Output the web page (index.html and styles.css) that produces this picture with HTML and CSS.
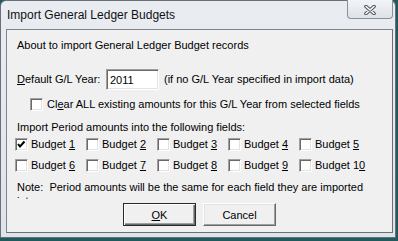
FILE: index.html
```html
<!DOCTYPE html>
<html>
<head>
<meta charset="utf-8">
<link rel="stylesheet" href="styles.css">
</head>
<body>
<div class="window">
  <div class="titlebar">
    <span class="title">Import General Ledger Budgets</span>
    <div class="close">
      <svg width="12" height="10" viewBox="0 0 12 10">
        <path d="M2 1.5 L10 8.5 M10 1.5 L2 8.5" stroke="#4d535b" stroke-width="3.6" stroke-linecap="round" fill="none"/>
        <path d="M2 1.5 L10 8.5 M10 1.5 L2 8.5" stroke="#ffffff" stroke-width="1.6" stroke-linecap="round" fill="none"/>
      </svg>
    </div>
  </div>
  <div class="client">
    <div class="intro">About to import General Ledger Budget records</div>
    <div class="year-row">
      <span class="lbl"><u>D</u>efault G/L Year:</span>
      <div class="input">2011</div>
      <span class="hint">(if no G/L Year specified in import data)</span>
    </div>
    <div class="clear-row">
      <span class="cb"></span>
      <span>Cl<u>e</u>ar ALL existing amounts for this G/L Year from selected fields</span>
    </div>
    <div class="import-label">Import Period amounts into the following fields:</div>
    <div class="grid">
      <div class="item"><span class="cb"><svg width="11" height="11" viewBox="0 0 11 11"><polyline points="2,5 4,7.5 8.5,2.5" stroke="#000" stroke-width="2" fill="none"/></svg></span><span>Budget <u>1</u></span></div>
      <div class="item"><span class="cb"></span><span>Budget <u>2</u></span></div>
      <div class="item"><span class="cb"></span><span>Budget <u>3</u></span></div>
      <div class="item"><span class="cb"></span><span>Budget <u>4</u></span></div>
      <div class="item"><span class="cb"></span><span>Budget <u>5</u></span></div>
      <div class="item"><span class="cb"></span><span>Budget <u>6</u></span></div>
      <div class="item"><span class="cb"></span><span>Budget <u>7</u></span></div>
      <div class="item"><span class="cb"></span><span>Budget <u>8</u></span></div>
      <div class="item"><span class="cb"></span><span>Budget <u>9</u></span></div>
      <div class="item"><span class="cb"></span><span>Budget 1<u>0</u></span></div>
    </div>
    <div class="note">Note:&nbsp; Period amounts will be the same for each field they are imported<br>into.</div>
    <div class="buttons">
      <div class="btn default"><span><u>O</u>K</span></div>
      <div class="btn">Cancel</div>
    </div>
  </div>
</div>
</body>
</html>
```
FILE: styles.css
```css
html, body {
  margin: 0;
  padding: 0;
}
body {
  width: 398px;
  height: 241px;
  overflow: hidden;
  background: #1f5a5c;
  font-family: "Liberation Sans", Arial, sans-serif;
  font-size: 11px;
  color: #000;
}
.window {
  width: 396px;
  height: 238px;
  box-sizing: border-box;
  border: 1px solid #6a7078;
  border-radius: 6px 6px 0 0;
  background: linear-gradient(#e9edf2, #dfe4ea);
  padding: 0 2px 4px 5px;
  display: flex;
  flex-direction: column;
}
.titlebar {
  height: 28px;
  flex: none;
  display: flex;
  justify-content: space-between;
  align-items: flex-start;
}
.title {
  font-size: 12px;
  margin-left: 1px;
  margin-top: 7px;
  color: #111;
}
.close {
  width: 46px;
  height: 19px;
  box-sizing: border-box;
  margin-top: -1px;
  border: 1px solid #8a9099;
  border-top: none;
  border-radius: 0 0 4px 4px;
  background: linear-gradient(#f2f4f7, #dde2e8);
  display: flex;
  align-items: center;
  justify-content: center;
  padding-top: 1px;
}
.client {
  flex: 1;
  border: 1px solid #7f858c;
  border-right-color: #6b6f74;
  border-bottom-color: #6b6f74;
  background: #f0f0f0;
  padding: 8px 10px 0 10px;
  display: flex;
  flex-direction: column;
}
.intro {
  height: 14px;
  line-height: 14px;
}
.year-row {
  margin-top: 16px;
  height: 22px;
  display: flex;
  align-items: center;
}
.lbl {
  width: 89px;
}
.input {
  width: 53px;
  height: 21px;
  box-sizing: border-box;
  background: #fff;
  border: 1px solid;
  border-color: #a0a0a0 #fff #fff #a0a0a0;
  box-shadow: inset 1px 1px #696969, inset -1px -1px #e3e3e3;
  padding: 3px 0 0 3px;
  line-height: 14px;
}
.hint {
  margin-left: 5px;
}
.clear-row {
  margin-top: 7px;
  height: 14px;
  display: flex;
  align-items: center;
  gap: 4px;
  padding-left: 13px;
}
.cb {
  width: 13px;
  height: 13px;
  flex: none;
  box-sizing: border-box;
  background: #fff;
  border: 1px solid;
  border-color: #a0a0a0 #fff #fff #a0a0a0;
  box-shadow: inset 1px 1px #696969, inset -1px -1px #e3e3e3;
  display: flex;
  align-items: center;
  justify-content: center;
}
.import-label {
  margin-top: 9px;
  height: 14px;
  line-height: 14px;
}
.grid {
  margin-top: 2px;
  margin-left: -2px;
  display: grid;
  grid-template-columns: repeat(5, 71px);
  row-gap: 5px;
}
.item {
  height: 16px;
  display: flex;
  align-items: center;
  gap: 3px;
}
.note {
  margin-top: 7px;
  height: 19px;
  line-height: 14px;
  overflow: hidden;
}
.buttons {
  margin-top: 4px;
  display: flex;
  justify-content: center;
  gap: 7px;
}
.btn {
  width: 73px;
  height: 23px;
  box-sizing: border-box;
  background: #f0f0f0;
  border: 1px solid;
  border-color: #fff #696969 #696969 #fff;
  box-shadow: inset -1px -1px #a0a0a0, inset 1px 1px #e3e3e3;
  display: flex;
  align-items: center;
  justify-content: center;
}
.btn.default {
  border: 1px solid #2a2a2a;
  box-shadow: inset 1px 1px #fff, inset -1px -1px #696969, inset -2px -2px #a0a0a0;
}
```
